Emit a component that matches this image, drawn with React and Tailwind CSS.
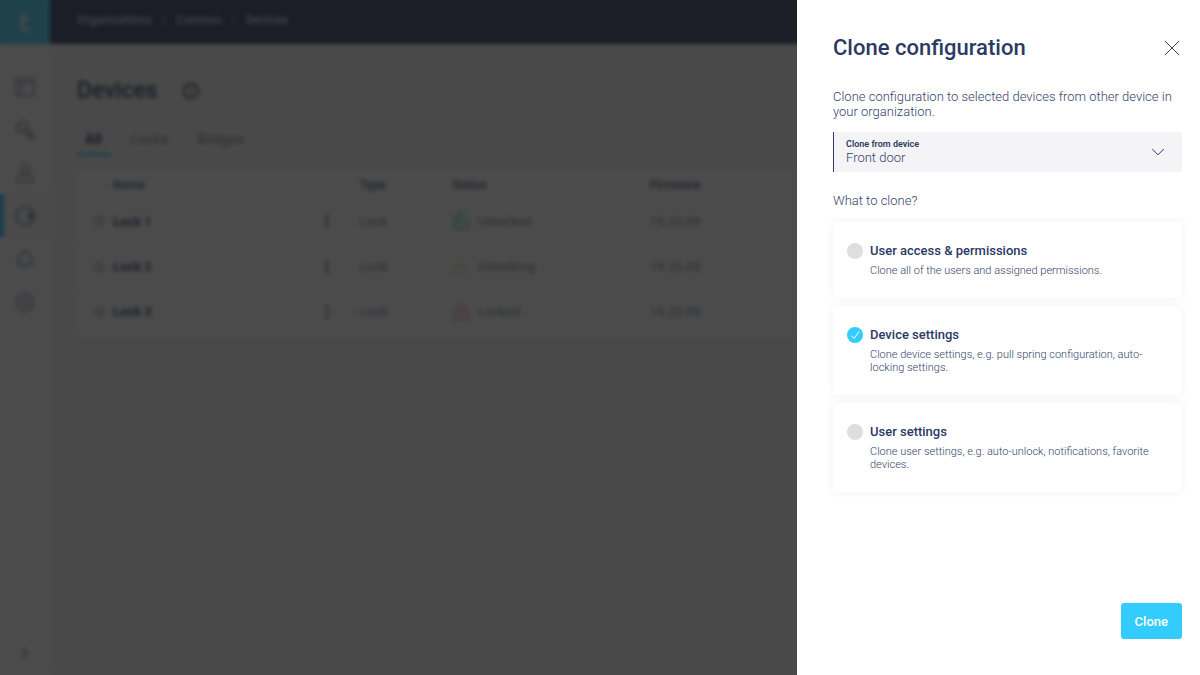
import React, { useState } from "react";

const crumbs = ["Organizations", "Contoso", "Devices"];

const devices = [
  { name: "Lock 1", type: "Lock", status: "Unlocked", color: "text-[#19c27a]", open: true, firmware: "19.23.09" },
  { name: "Lock 2", type: "Lock", status: "Unlocking", color: "text-[#ecd9a8]", open: true, firmware: "19.23.09" },
  { name: "Lock 3", type: "Lock", status: "Locked", color: "text-[#e87a82]", open: false, firmware: "19.23.09" },
];

const options = [
  { id: "access", title: "User access & permissions", text: "Clone all of the users and assigned permissions." },
  { id: "device", title: "Device settings", text: "Clone device settings, e.g. pull spring configuration, auto-locking settings." },
  { id: "user", title: "User settings", text: "Clone user settings, e.g. auto-unlock, notifications, favorite devices." },
];

function Icon({ className, children, strokeWidth = 1.5 }) {
  return (
    <svg viewBox="0 0 20 20" fill="none" stroke="currentColor" strokeWidth={strokeWidth} className={className} aria-hidden="true">
      {children}
    </svg>
  );
}

const navItems = [
  { label: "Dashboard", art: <><rect x="1" y="1.5" width="18" height="17" rx="1" /><path d="M1 5.500h18M6 5.500v13" /></> },
  { label: "Access", art: <><path d="M6.500 1 1 6.500l1.500 4.500 4.500 1.500 5.500-5.500L11 2.500zM8.500 11.500l7.500 7.500h3v-3l-7.500-7.500M4.500 4.500l2.500 2.500M13 16l3-3" /></> },
  { label: "Users", art: <><circle cx="10" cy="5" r="4" /><path d="M1.500 18.500c0-4 2.500-6.500 5.500-7.500l3 2.500 3-2.500c3 1 5.500 3.500 5.500 7.500z" /></> },
  { label: "Devices", active: true, art: <><circle cx="10" cy="10" r="9" /><circle cx="15.500" cy="10" r="2" fill="currentColor" /></> },
  { label: "Notifications", art: <><path d="M2.500 15.500h15c-1.500-1.500-1.500-3-1.500-6.500a6 6 0 0 0-12 0c0 3.500 0 5-1.500 6.500zM8 18.500h4M10 1v2" /></> },
  { label: "Settings", art: <><path d="M7.500 1.500h5l1 2 2.500.5 2.500 3.500-1 2.500 1 2.500-2.500 3.500-2.500.5-1 2h-5l-1-2-2.500-.5-2.500-3.500 1-2.500-1-2.500L4 4l2.500-.5z" /><circle cx="10" cy="10" r="3.500" /></> },
];

function Sidebar() {
  return (
    <aside className="flex w-[50px] shrink-0 flex-col bg-white">
      <a href="#home" aria-label="Home" className="flex h-11 items-center justify-center bg-[#40d4fa]">
        <svg viewBox="0 0 14 20" className="h-5 w-3.5" fill="none" stroke="#fff" strokeWidth="3" aria-hidden="true">
          <path d="M4.500 1v13q0 3.500 4 3.500h3M4.500 7h7" />
        </svg>
      </a>
      <nav className="mt-[21px] flex flex-1 flex-col">
        {navItems.map((item) => (
          <a
            key={item.label}
            href={"#" + item.label.toLowerCase()}
            aria-label={item.label}
            className={
              item.active
                ? "flex h-[43px] items-center justify-center border-l-4 border-[#33ccff] bg-[#f9f9fa] pr-1 text-[#6b7590]"
                : "flex h-[43px] items-center justify-center text-[#7b849c]"
            }
          >
            <Icon className="h-5 w-5">{item.art}</Icon>
          </a>
        ))}
      </nav>
      <button type="button" aria-label="Expand menu" className="flex h-11 items-center justify-center text-[#6b7590]">
        <Icon className="h-3 w-3" strokeWidth={2.5}><path d="m6 2 8 8-8 8" /></Icon>
      </button>
    </aside>
  );
}

function LockGlyph({ className, open }) {
  return (
    <Icon className={"h-[18px] w-[18px] " + className}>
      <rect x="2" y="9" width="16" height="9.500" rx="1" />
      <path d={open ? "M5 9V6a4.500 4.500 0 0 1 8.500-2" : "M5.500 9V6a4.500 4.500 0 0 1 9 0v3"} />
      <path d="M10 12v3.500" />
    </Icon>
  );
}

function DevicesPage() {
  return (
    <div className="flex min-h-screen w-full bg-[#f7f7f8] text-[13px] text-[#7b849c]">
      <Sidebar />
      <div className="flex min-w-0 flex-1 flex-col">
        <header className="flex h-11 items-center bg-[#303c66] pb-1 pl-[27px]">
          <nav aria-label="Breadcrumb" className="flex items-center gap-2.5 text-xs font-medium text-[#d4d7e0]">
            {crumbs.map((crumb, i) => (
              <React.Fragment key={crumb}>
                {i > 0 && <span className="text-[#a0a6b8]">/</span>}
                <a href={"#" + crumb.toLowerCase()}>{crumb}</a>
              </React.Fragment>
            ))}
          </nav>
        </header>
        <main className="pl-[27px]">
          <div className="mt-8 flex h-[30px] items-center gap-6">
            <h1 className="text-[23px] font-medium text-[#2b3a63]">Devices</h1>
            <Icon className="h-[18px] w-[18px] text-[#4a5062]" strokeWidth={2.5}>
              <circle cx="10" cy="10" r="8" />
              <path d="M10 5.500v2M10 9v5" />
            </Icon>
          </div>
          <div className="mt-[18px] flex gap-[19px] text-sm">
            <button type="button" className="h-8 border-b-[3px] border-[#33ccff] px-2 font-bold text-[#2b3a63]">All</button>
            <button type="button" className="h-8 border-b-[3px] border-transparent px-0.5">Locks</button>
            <button type="button" className="h-8 border-b-[3px] border-transparent px-2">Bridges</button>
          </div>
          <table className="mt-3.5 w-full table-fixed bg-white text-left">
            <thead>
              <tr className="h-[30px] text-xs text-[#5b6580]">
                <th className="w-9" aria-label="Select" />
                <th className="w-[204px] font-semibold">Name</th>
                <th className="w-[43px]" aria-label="Actions" />
                <th className="w-[92px] font-semibold">Type</th>
                <th className="w-[198px] font-semibold">Status</th>
                <th className="font-semibold">Firmware</th>
              </tr>
            </thead>
            <tbody>
              {devices.map((d) => (
                <tr key={d.name} className="h-[45px] border-b border-[#f7f7f8]">
                  <td className="pb-0.5 pl-4">
                    <Icon className="h-3 w-3 text-[#a0a6b4]" strokeWidth={2}>
                      <circle cx="10" cy="10" r="8" />
                      <circle cx="10" cy="10" r="3" />
                    </Icon>
                  </td>
                  <td className="pb-0.5 font-bold text-[#3b4870]">{d.name}</td>
                  <td className="pb-0.5">
                    <button type="button" aria-label={"Actions for " + d.name} className="flex w-5 justify-center text-[#3b4870]">
                      <svg viewBox="0 0 4 16" className="h-4 w-1" fill="currentColor" aria-hidden="true">
                        <circle cx="2" cy="3" r="1.600" />
                        <circle cx="2" cy="8" r="1.600" />
                        <circle cx="2" cy="13" r="1.600" />
                      </svg>
                    </button>
                  </td>
                  <td className="pb-0.5">{d.type}</td>
                  <td className="pb-0.5">
                    <span className="flex items-center gap-2">
                      <LockGlyph className={d.color} open={d.open} />
                      {d.status}
                    </span>
                  </td>
                  <td className="pb-0.5">{d.firmware}</td>
                </tr>
              ))}
            </tbody>
          </table>
        </main>
      </div>
    </div>
  );
}

function Option({ option, checked, onToggle }) {
  return (
    <label className="flex gap-[7px] rounded-[3px] bg-white py-[21px] pr-6 pl-3.5 shadow-[0_0_8px_rgba(0,0,0,0.06)]">
      <span className="grid h-4 w-4 shrink-0 place-items-center">
        <input
          type="checkbox"
          checked={checked}
          onChange={onToggle}
          aria-describedby={option.id + "-text"}
          className="col-start-1 row-start-1 h-4 w-4 appearance-none rounded-full bg-[#dedede] checked:bg-[#33ccff]"
        />
        {checked && (
          <svg viewBox="0 0 16 16" className="pointer-events-none col-start-1 row-start-1 h-4 w-4" fill="none" stroke="#fff" aria-hidden="true">
            <path d="m4.500 8.800 2.600 2.700 5-7.100" />
          </svg>
        )}
      </span>
      <span className="flex flex-col gap-[5px]">
        <span className="text-[13px] leading-4 font-medium text-[#2b3a63]">{option.title}</span>
        <span id={option.id + "-text"} className="text-[11px] leading-[13px] font-light text-[#34436b]">{option.text}</span>
      </span>
    </label>
  );
}

function ClonePanel() {
  const [selected, setSelected] = useState(["device"]);
  const toggle = (id) => setSelected((s) => (s.includes(id) ? s.filter((x) => x !== id) : [...s, id]));

  return (
    <section
      role="dialog"
      aria-modal="true"
      aria-labelledby="clone-title"
      className="absolute inset-y-0 right-0 flex w-[403px] flex-col bg-white pt-[34px] pr-[18px] pb-9 pl-9 text-[13px] leading-[15px] font-light text-[#34436b]"
    >
      <div className="flex items-center justify-between">
        <h2 id="clone-title" className="text-[22px] leading-7 font-medium text-[#2b3a63]">Clone configuration</h2>
        <button type="button" aria-label="Close" className="flex h-5 w-5 items-center justify-center">
          <svg viewBox="0 0 16 16" className="h-4 w-4" fill="none" stroke="currentColor" aria-hidden="true">
            <path d="M1 1l14 14M15 1 1 15" />
          </svg>
        </button>
      </div>
      <p className="mt-[27px]">Clone configuration to selected devices from other device in your organization.</p>
      <div className="mt-[13px] flex h-10 items-center rounded-r-[3px] border-l border-[#2b3a63] bg-[#f4f4f6] pr-[17px] pl-3">
        <div className="flex flex-1 flex-col">
          <label htmlFor="source" className="text-[9px] leading-3 font-semibold text-[#2b3a63]">Clone from device</label>
          <select id="source" className="h-4 w-full appearance-none bg-transparent text-[13px] leading-4 font-light outline-none" defaultValue="Front door">
            <option>Front door</option>
          </select>
        </div>
        <svg viewBox="0 0 14 8" className="h-2 w-3.5" fill="none" stroke="#2b3a63" aria-hidden="true">
          <path d="m1.200 1 5.800 5.800L12.800 1" />
        </svg>
      </div>
      <fieldset className="mt-[21px] flex flex-col">
        <legend className="mb-3.5">What to clone?</legend>
        <div className="flex flex-col gap-2">
          {options.map((o) => (
            <Option key={o.id} option={o} checked={selected.includes(o.id)} onToggle={() => toggle(o.id)} />
          ))}
        </div>
      </fieldset>
      <button type="button" className="mt-auto h-9 self-end rounded-[3px] bg-[#33ccff] px-3.5 text-[13px] font-medium text-white">
        Clone
      </button>
    </section>
  );
}

export default function App() {
  return (
    <div className="relative min-h-screen overflow-hidden font-[Roboto,sans-serif]">
      <DevicesPage />
      <div className="absolute inset-0 bg-[#151515]/77 backdrop-blur-[2px]" />
      <ClonePanel />
    </div>
  );
}
